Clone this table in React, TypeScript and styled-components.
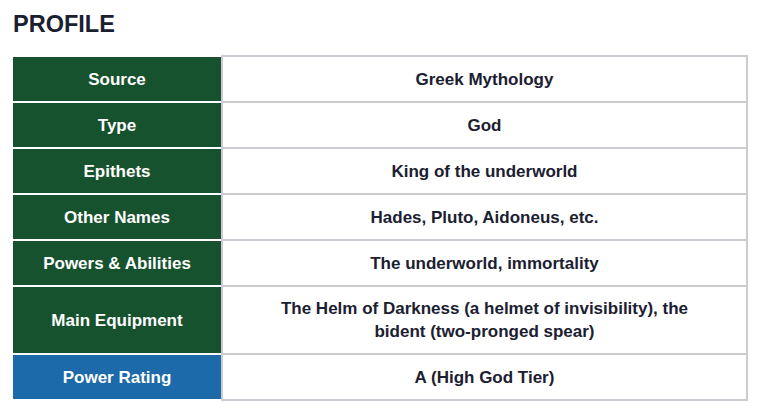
import React from 'react';
import styled, { createGlobalStyle } from 'styled-components';

const GlobalStyle = createGlobalStyle`
  html, body {
    margin: 0;
    padding: 0;
    background: #ffffff;
  }

  body {
    font-family: "Liberation Sans", Arial, sans-serif;
  }
`;

const Page = styled.div`
  width: 760px;
  padding: 12px 13px 0 13px;
  box-sizing: border-box;
`;

const Heading = styled.h2`
  margin: 0 0 19px 0;
  font-size: 23.5px;
  line-height: 24px;
  font-weight: 700;
  color: #1b2031;
`;

const Table = styled.div`
  width: 735px;
  display: flex;
  flex-direction: column;
`;

const Row = styled.div`
  display: grid;
  grid-template-columns: 208px 1fr;
`;

const Label = styled.div<{ $accent?: boolean; $last?: boolean }>`
  margin-top: 2px;
  margin-bottom: ${(p) => (p.$last ? '2px' : '0')};
  background: ${(p) => (p.$accent ? '#1c6aa9' : '#17522f')};
  color: #ffffff;
  font-size: 17px;
  font-weight: 700;
  line-height: 23px;
  display: flex;
  align-items: center;
  justify-content: center;
  text-align: center;
  padding: 0 12px;
`;

const Value = styled.div<{ $last?: boolean }>`
  border: 2px solid #cbccd2;
  border-bottom: ${(p) => (p.$last ? '2px solid #cbccd2' : 'none')};
  min-height: 44px;
  box-sizing: content-box;
  padding: 0 40px;
  display: flex;
  align-items: center;
  justify-content: center;
  text-align: center;
  font-size: 17px;
  font-weight: 700;
  line-height: 23px;
  color: #1b2031;

  span {
    padding: 10px 0;
  }
`;

type Entry = { label: string; value: string; accent?: boolean };

const rows: Entry[] = [
  { label: 'Source', value: 'Greek Mythology' },
  { label: 'Type', value: 'God' },
  { label: 'Epithets', value: 'King of the underworld' },
  { label: 'Other Names', value: 'Hades, Pluto, Aidoneus, etc.' },
  { label: 'Powers & Abilities', value: 'The underworld, immortality' },
  {
    label: 'Main Equipment',
    value: 'The Helm of Darkness (a helmet of invisibility), the bident (two-pronged spear)',
  },
  { label: 'Power Rating', value: 'A (High God Tier)', accent: true },
];

const App: React.FC = () => {
  return (
    <>
      <GlobalStyle />
      <Page>
        <Heading>PROFILE</Heading>
        <Table>
          {rows.map((r, i) => {
            const last = i === rows.length - 1;
            return (
              <Row key={r.label}>
                <Label $accent={r.accent} $last={last}>{r.label}</Label>
                <Value $last={last}>
                  <span>{r.value}</span>
                </Value>
              </Row>
            );
          })}
        </Table>
      </Page>
    </>
  );
};

export default App;
